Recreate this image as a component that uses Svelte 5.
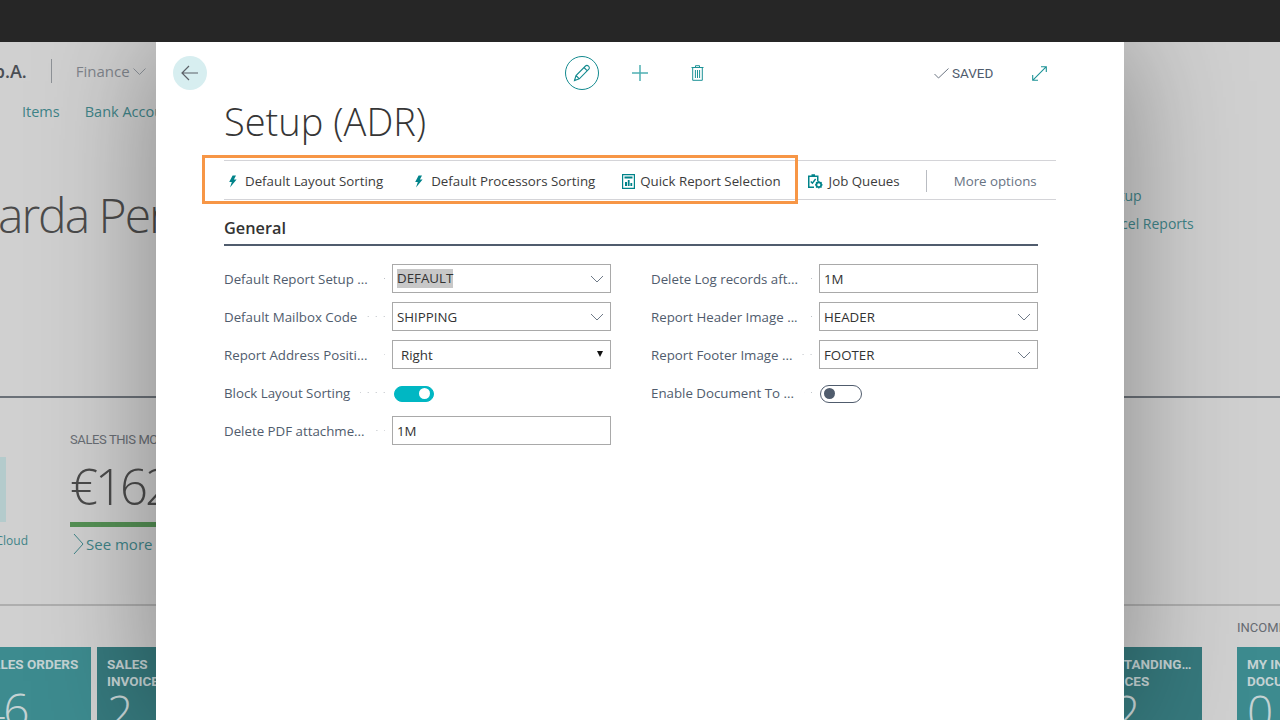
<script>
  const left_fields = [
    { label: "Default Report Setup ...", value: "DEFAULT", kind: "lookup", selected: true },
    { label: "Default Mailbox Code", value: "SHIPPING", kind: "lookup" },
    { label: "Report Address Positi...", value: "Right", kind: "select" },
    { label: "Block Layout Sorting", on: true, kind: "toggle" },
    { label: "Delete PDF attachme...", value: "1M", kind: "text" }
  ];
  const right_fields = [
    { label: "Delete Log records aft...", value: "1M", kind: "text" },
    { label: "Report Header Image ...", value: "HEADER", kind: "lookup" },
    { label: "Report Footer Image ...", value: "FOOTER", kind: "lookup" },
    { label: "Enable Document To ...", on: false, kind: "toggle" }
  ];
</script>

{#snippet bolt()}
  <svg class="bolt" width="9" height="13" viewBox="0 0 9 13">
    <path d="M4.6 0.5H8L5.9 4.6H8.6L2 12.6L3.8 6.9H1.2Z" fill="#00838a" />
  </svg>
{/snippet}

{#snippet field(f)}
  <div class="row">
    <span class="label">{f.label}</span>
    <span class="leader"></span>
    {#if f.kind === "toggle"}
      <span class="toggle" class:on={f.on}><span class="knob"></span></span>
    {:else}
      <div class="input" class:native={f.kind === "select"}>
        {#if f.selected}<span class="sel">{f.value}</span>{:else}<span>{f.value}</span>{/if}
        {#if f.kind === "lookup"}
          <svg class="chev" width="14" height="8" viewBox="0 0 14 8">
            <path d="M1 1L7 7L13 1" fill="none" stroke="#6f7a88" stroke-width="1" />
          </svg>
        {/if}
        {#if f.kind === "select"}<span class="tri"></span>{/if}
      </div>
    {/if}
  </div>
{/snippet}

<div class="page">
  <div class="topbar"></div>

  <div class="back">
    <section class="head">
      <div class="company">
        <span class="name">S.p.A.</span>
        <span class="sep"></span>
        <span class="menu">Finance</span>
        <svg width="13" height="7" viewBox="0 0 13 7"><path d="M.5.5L6.5 6.5L12.5.5" fill="none" stroke="#8d9299" /></svg>
      </div>
      <div class="nav"><span>Items</span><span>Bank Accounts</span></div>
      <div class="hello">
        <span class="big">Riccarda Per</span>
        <div class="side"><span>Setup</span><span>Excel Reports</span></div>
      </div>
    </section>

    <section class="cues">
      <div class="cloud"><div class="cloud-box"></div><span>Cloud</span></div>
      <div class="sales">
        <div class="cue-title">SALES THIS MONTH</div>
        <div class="amount">€162</div>
        <div class="bar"></div>
        <div class="more">
          <svg width="11" height="22" viewBox="0 0 11 22"><path d="M1 1L10 11L1 21" fill="none" stroke="#3f8488" /></svg>
          <span>See more</span>
        </div>
      </div>
    </section>

    <section class="tiles">
      <div class="group first">
        <div class="tile wide"><div class="tile-name">SALES ORDERS</div><div class="num n-low">46</div></div>
        <div class="tile"><div class="tile-name">SALES<br />INVOICES</div><div class="num">2</div></div>
      </div>
      <div class="group last">
        <div class="tile long"><div class="tile-name">OUTSTANDING…<br />INVOICES</div><div class="num right">2</div></div>
        <div class="tile-col">
          <div class="incoming">INCOMING</div>
          <div class="tile"><div class="tile-name">MY INCOMING<br />DOCUMENTS</div><div class="num">0</div></div>
        </div>
      </div>
    </section>
  </div>

  <div class="modal">
    <header class="tools">
      <button class="round back-btn" aria-label="Back">
        <svg width="18" height="16" viewBox="0 0 18 16">
          <path d="M17 8H1M8 1L1 8L8 15" fill="none" stroke="#5c6168" stroke-width="1.2" />
        </svg>
      </button>
      <div class="mid">
        <button class="round edit" aria-label="Edit">
          <svg width="18" height="18" viewBox="0 0 18 18">
            <path d="M1.5 16.5L3 11.5L12.5 2C13.3 1.2 14.5 1.2 15.5 2.2C16.5 3.2 16.6 4.4 15.8 5.2L6.3 14.8ZM3 11.5L6.3 14.8M11 3.5L14.3 6.8" fill="none" stroke="#138a8f" stroke-width="1.1" />
          </svg>
        </button>
        <svg class="plus" width="16" height="16" viewBox="0 0 16 16">
          <path d="M8 0V16M0 8H16" stroke="#4fb0b3" stroke-width="1.5" />
        </svg>
        <svg class="trash" width="13" height="16" viewBox="0 0 13 16">
          <path d="M.5 2.5H12.5M4.5 2.5V.7H8.5V2.5M1.7 2.5V15.3H11.3V2.5M4.4 5V13M6.5 5V13M8.6 5V13" fill="none" stroke="#1c9296" stroke-width="1" />
        </svg>
      </div>
      <div class="status">
        <svg width="15" height="11" viewBox="0 0 15 11"><path d="M.5 6L4.5 10L14.5.5" fill="none" stroke="#6d7683" /></svg>
        <span>SAVED</span>
      </div>
      <svg class="expand" width="15" height="15" viewBox="0 0 15 15">
        <path d="M.7 14.3L14.3 .7M9 .7H14.3V6M.7 9V14.3H6" fill="none" stroke="#1c9296" stroke-width="1.1" />
      </svg>
    </header>

    <h1>Setup (ADR)</h1>

    <nav class="actions">
      <span class="act a1">{@render bolt()}Default Layout Sorting</span>
      <span class="act a2">{@render bolt()}Default Processors Sorting</span>
      <span class="act a3">
        <svg class="ic" width="13" height="15" viewBox="0 0 13 15">
          <path d="M.6.6H12.4V14.4H.6Z" fill="none" stroke="#00838a" stroke-width="1.2" />
          <path d="M2.5 2.5H10.5V4.5H2.5ZM3 8H5V12H3ZM5.8 6H7.6V12H5.8ZM8.4 9H10.2V12H8.4Z" fill="#00838a" />
        </svg>
        Quick Report Selection
      </span>
      <span class="act a4">
        <svg class="ic" width="16" height="16" viewBox="0 0 16 16">
          <path d="M1 2.5H4.5V1.2H8V2.5H11.5V8.5H10V4H2.5V13.5H7V15H1Z" fill="#00838a" />
          <path d="M3.8 8.5L5.4 10.2L8.6 6" fill="none" stroke="#00838a" stroke-width="1.4" />
          <circle cx="11.8" cy="11.8" r="2.4" fill="none" stroke="#00838a" stroke-width="1.7" />
          <path d="M11.8 8V9M11.8 14.6V15.6M8 11.8H9M14.6 11.8H15.6M9.1 9.1L9.8 9.8M13.8 13.8L14.5 14.5M14.5 9.1L13.8 9.8M9.8 13.8L9.1 14.5" stroke="#00838a" stroke-width="1.2" />
        </svg>
        Job Queues
      </span>
      <span class="divider"></span>
      <span class="act more-opts">More options</span>
    </nav>

    <div class="highlight"></div>

    <section class="general">
      <h2>General</h2>
      <div class="columns">
        <div class="col">{#each left_fields as f}{@render field(f)}{/each}</div>
        <div class="col">{#each right_fields as f}{@render field(f)}{/each}</div>
      </div>
    </section>
  </div>
</div>

<style>
  :global(body) {
    margin: 0;
    overflow: hidden;
  }
  .page {
    position: relative;
    width: 1280px;
    height: 720px;
    overflow: hidden;
    font-family: "Open Sans", "Noto Sans", sans-serif;
    background: #d0d0d0;
  }
  .topbar {
    position: relative;
    z-index: 2;
    height: 42px;
    background: #262626;
  }
  .back {
    height: 678px;
    display: flex;
    flex-direction: column;
    overflow: hidden;
  }

  /* dimmed page behind the dialog */
  .head {
    height: 354px;
    flex: none;
    border-bottom: 2px solid #6b7178;
    display: flex;
    flex-direction: column;
    overflow: hidden;
  }
  .company {
    height: 58px;
    flex: none;
    display: flex;
    align-items: center;
    margin-left: -21px;
    color: #7f848b;
    font-size: 15px;
  }
  .company .name {
    font-weight: 600;
    font-size: 18px;
    color: #4a4e54;
  }
  .company .sep {
    width: 1px;
    height: 24px;
    background: #8e9297;
    margin: 0 24px;
  }
  .company .menu {
    margin-right: 3px;
  }
  .nav {
    display: flex;
    gap: 25px;
    margin: 2px 0 0 22px;
    color: #3f8488;
    font-size: 14.5px;
  }
  .hello {
    display: flex;
    justify-content: space-between;
    margin: 0 0 0 -79px;
  }
  .big {
    font-size: 48px;
    font-weight: 300;
    letter-spacing: -2px;
    color: #4b4b4b;
    margin-top: 61px;
    white-space: nowrap;
  }
  .side {
    display: flex;
    flex-direction: column;
    align-items: flex-start;
    width: 174px;
    margin-top: 61px;
    font-size: 14px;
    color: #3f8488;
    line-height: 28px;
    white-space: nowrap;
  }
  .side span:first-child {
    margin-left: -2px;
  }
  .cues {
    height: 206px;
    flex: none;
    border-bottom: 2px solid #aeaeae;
    display: flex;
  }
  .cloud {
    width: 70px;
    margin-left: -30px;
    padding-top: 59px;
    font-size: 12px;
    color: #3f8488;
    text-align: right;
    flex: none;
    margin-right: 30px;
  }
  .cloud-box {
    width: 36px;
    height: 65px;
    background: #b4cbcc;
    margin-bottom: 11px;
  }
  .cloud span {
    display: block;
    width: 58px;
    line-height: 16px;
  }
  .sales {
    padding-top: 34px;
    white-space: nowrap;
  }
  .cue-title {
    font-family: Roboto, sans-serif;
    font-size: 13px;
    letter-spacing: -0.4px;
    color: #696e75;
  }
  .amount {
    font-size: 49px;
    font-weight: 300;
    letter-spacing: -3px;
    color: #4b4b4b;
    line-height: 58px;
    margin-top: 10px;
  }
  .bar {
    width: 120px;
    height: 5px;
    background: #559155;
    margin-top: 7px;
  }
  .more {
    display: flex;
    align-items: center;
    gap: 2px;
    margin: 6px 0 0 3px;
    color: #3f8488;
    font-size: 15px;
  }
  .tiles {
    display: flex;
    justify-content: space-between;
    flex: 1;
    min-height: 0;
    overflow: hidden;
  }
  .group {
    display: flex;
    gap: 6px;
  }
  .group.first {
    margin: 41px 0 0 -27px;
  }
  .group.last {
    gap: 35px;
    margin: 17px -41px 0 0;
    align-items: flex-start;
  }
  .group.last > .tile {
    margin-top: 24px;
  }
  .tile {
    width: 84px;
    height: 90px;
    background: #36797d;
    box-sizing: border-box;
    padding: 9px 10px;
    color: #c4d2d3;
    overflow: hidden;
  }
  .tile.wide {
    width: 118px;
    background: #3d8b8f;
  }
  .tile.long {
    width: 123px;
  }
  .tile-name {
    font-family: Roboto, sans-serif;
    font-weight: 700;
    font-size: 13.5px;
    line-height: 17px;
    white-space: nowrap;
  }
  .num {
    font-size: 46px;
    font-weight: 300;
    line-height: 44px;
    margin-top: -1px;
    letter-spacing: -2px;
  }
  .num.right {
    padding-left: 25px;
  }
  .n-low {
    margin: 14px 0 0 -4px;
  }
  .incoming {
    font-family: Roboto, sans-serif;
    font-size: 13px;
    color: #666b72;
    height: 24px;
    line-height: 9px;
    white-space: nowrap;
  }
  .tile-col .tile {
    background: #3d8b8f;
  }

  /* dialog */
  .modal {
    position: absolute;
    left: 156px;
    top: 42px;
    width: 968px;
    height: 678px;
    background: #fff;
    box-shadow: 0 0 110px rgba(0, 0, 0, 0.36);
    box-sizing: border-box;
    padding: 14px 68px 0 68px;
    color: #212121;
  }
  .tools {
    height: 34px;
    display: flex;
    align-items: center;
    margin-left: -51px;
    width: 875px;
  }
  button {
    padding: 0;
    background: none;
    border: 0;
  }
  .round {
    width: 34px;
    height: 34px;
    border-radius: 50%;
    display: flex;
    align-items: center;
    justify-content: center;
    box-sizing: border-box;
    flex: none;
  }
  .back-btn {
    background: #d7eef0;
  }
  .edit {
    border: 1px solid #138a8f;
  }
  .mid {
    display: flex;
    align-items: center;
    margin-left: 358px;
  }
  .plus {
    margin-left: 33px;
  }
  .trash {
    margin-left: 43px;
  }
  .status {
    display: flex;
    align-items: center;
    gap: 3px;
    margin-left: 230px;
    font-family: Roboto, sans-serif;
    font-size: 13.5px;
    color: #505c6d;
  }
  .expand {
    margin-left: 39px;
  }
  h1 {
    margin: 7px 0 0;
    font-size: 38px;
    font-weight: 300;
    line-height: 48px;
    height: 63px;
    color: #363636;
  }
  .actions {
    height: 36px;
    padding-top: 2px;
    width: 832px;
    border-top: 1px solid #d4d4d8;
    border-bottom: 1px solid #d4d4d8;
    display: flex;
    align-items: center;
    font-size: 13.3px;
    color: #3c3c3c;
    white-space: nowrap;
  }
  .act {
    display: flex;
    align-items: center;
  }
  .bolt {
    margin-right: 8px;
  }
  .ic {
    margin-right: 5px;
  }
  .a1 {
    margin-left: 4px;
  }
  .a2 {
    margin-left: 31px;
  }
  .a3 {
    margin-left: 27px;
  }
  .a4 {
    margin-left: 26px;
  }
  .a4 .ic {
    margin-right: 6px;
  }
  .divider {
    width: 1px;
    height: 22px;
    background: #b9bcc2;
    margin-left: 26px;
  }
  .more-opts {
    margin-left: 27px;
    color: #687383;
  }
  .highlight {
    position: absolute;
    left: 46px;
    top: 113px;
    width: 596px;
    height: 49px;
    box-sizing: border-box;
    border: 3px solid #f79646;
    pointer-events: none;
  }
  .general {
    width: 814px;
  }
  h2 {
    margin: 16px 0 0;
    height: 28px;
    font-size: 16.3px;
    font-weight: 600;
    line-height: 24px;
    color: #333;
    border-bottom: 2px solid #505c6d;
  }
  .columns {
    display: grid;
    grid-template-columns: 387px 387px;
    column-gap: 40px;
    margin-top: 18px;
  }
  .row {
    height: 29px;
    margin-bottom: 9px;
    display: flex;
    align-items: center;
    font-size: 13.3px;
  }
  .label {
    color: #505c6d;
    white-space: nowrap;
    flex: none;
  }
  .leader {
    flex: 1;
    height: 1px;
    margin: 0 7px 0 10px;
    background-image: linear-gradient(to right, transparent 7px, #bdc1c6 7px);
    background-size: 8px 1px;
    background-position: right center;
    background-repeat: repeat-x;
  }
  .input {
    width: 219px;
    height: 29px;
    flex: none;
    box-sizing: border-box;
    border: 1px solid #a9a9a9;
    padding: 0 4px;
    display: flex;
    align-items: center;
    justify-content: space-between;
    color: #333;
  }
  .input.native {
    padding-left: 8px;
  }
  .sel {
    background: #c8c8c8;
    line-height: 19px;
  }
  .chev {
    margin-right: 2px;
  }
  .tri {
    width: 0;
    height: 0;
    border-left: 3px solid transparent;
    border-right: 3px solid transparent;
    border-top: 6px solid #111;
    margin-right: 3px;
    margin-bottom: 2px;
  }
  .toggle {
    width: 42px;
    height: 18px;
    box-sizing: border-box;
    border: 1px solid #505c6d;
    border-radius: 9px;
    display: flex;
    align-items: center;
    flex: none;
    margin: 2px 176px 0 1px;
    padding: 0 3px;
  }
  .toggle .knob {
    width: 11px;
    height: 11px;
    border-radius: 50%;
    background: #505c6d;
  }
  .toggle.on {
    width: 40px;
    height: 16px;
    background: #00b7c3;
    border-color: #00b7c3;
    justify-content: flex-end;
    margin: 2px 177px 0 2px;
  }
  .toggle.on .knob {
    background: #fff;
  }
</style>
